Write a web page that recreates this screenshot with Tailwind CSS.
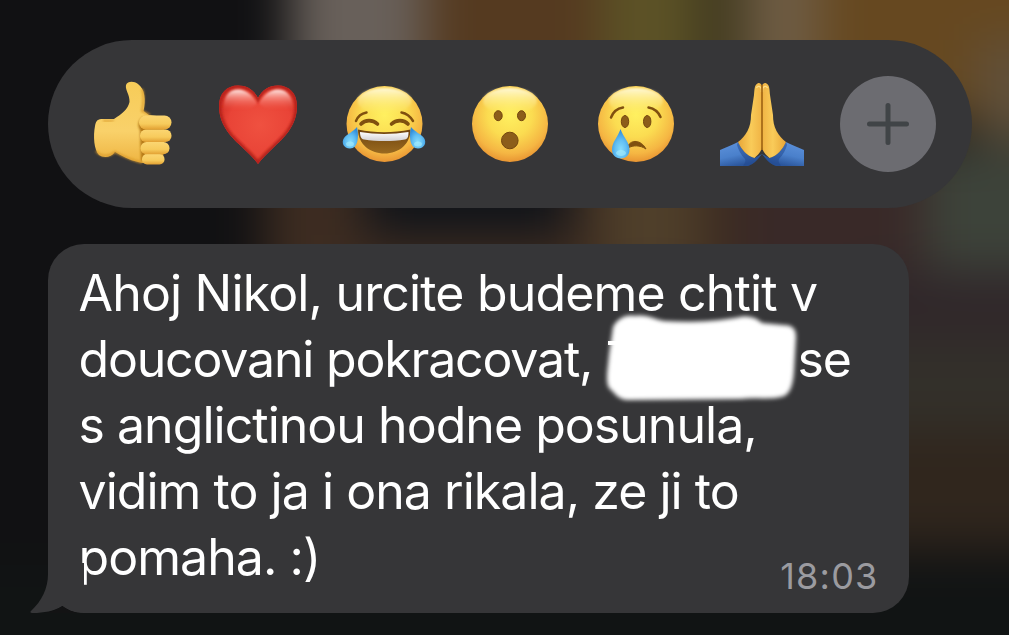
<!DOCTYPE html>
<html lang="cs">
<head>
<meta charset="utf-8">
<title>Message reactions</title>
<script src="https://cdn.jsdelivr.net/npm/@tailwindcss/browser@4"></script>
</head>
<body class="relative h-[635px] w-[1009px] overflow-hidden bg-[#111113] font-['Inter',sans-serif]">
<!-- blurred wallpaper -->
<svg class="absolute inset-0" width="1009" height="635" viewBox="0 0 1009 635">
  <defs><filter id="bl" x="-300" y="-300" width="1600" height="1300" filterUnits="userSpaceOnUse" color-interpolation-filters="sRGB"><feGaussianBlur stdDeviation="24"/></filter></defs>
  <rect width="1009" height="635" fill="#111113"/>
  <g filter="url(#bl)">
    <rect x="-300" y="-300" width="1700" height="1300" fill="#111113"/>
    <rect x="290" y="-120" width="140" height="240" fill="#68605a"/>
    <rect x="425" y="-120" width="190" height="240" fill="#553a20"/>
    <rect x="600" y="-120" width="100" height="240" fill="#5c5226"/>
    <rect x="695" y="-120" width="50" height="240" fill="#40391f"/>
    <rect x="745" y="-120" width="80" height="240" fill="#6e5c44"/>
    <rect x="820" y="-120" width="330" height="240" fill="#664820"/>
    <rect x="975" y="40" width="150" height="100" fill="#60503a"/>
    <rect x="265" y="120" width="660" height="180" fill="#3d2c21"/>
    <rect x="365" y="120" width="205" height="115" fill="#0f1319"/>
    <rect x="600" y="150" width="100" height="130" fill="#4f3f2a"/>
    <rect x="740" y="160" width="220" height="140" fill="#392928"/>
    <rect x="925" y="145" width="200" height="125" fill="#3d433a"/>
    <rect x="850" y="270" width="300" height="80" fill="#30272a"/>
    <rect x="850" y="340" width="300" height="90" fill="#33302a"/>
    <rect x="850" y="430" width="300" height="120" fill="#30261d"/>
    <rect x="-200" y="565" width="1400" height="200" fill="#111414"/>
  </g>
</svg>

<main class="relative flex flex-col items-start gap-9 pl-12 pt-10">
  <section class="flex h-[168px] w-[924px] items-center gap-4 rounded-full bg-[#363638] pl-8">
    <svg class="shrink-0" width="110" height="110" viewBox="0 -1 110 110">
      <defs>
        <linearGradient id="th" x1="0" y1="0" x2="0" y2="1"><stop offset="0" stop-color="#f7cc58"/><stop offset=".6" stop-color="#f9d16a"/><stop offset="1" stop-color="#eeb340"/></linearGradient>
        <linearGradient id="fi" x1="0" y1="0" x2="0" y2="1"><stop offset="0" stop-color="#fbd672"/><stop offset=".6" stop-color="#f7cb5c"/><stop offset="1" stop-color="#e2a032"/></linearGradient>
        <filter id="s1" x="-20%" y="-20%" width="140%" height="140%"><feGaussianBlur stdDeviation="1"/></filter>
      </defs>
      <path d="M46 15C47.500 11 54 11 58 14C65 19 66 30 63.500 41L69 45L84 47L83 92C76 95 66 94 58 92C49 90 42 86 35 82C31 88 23 88 19 85C14 80 13 66 15 56C16 50 18 49 23 49L34 49C42 44 48 39 49.500 32C50 25 45 20 46 15Z" fill="url(#th)"/>
      <path d="M62 19C65 27 63 35 62 41L70 45M16 81C22 88 30 86 35 82C45 87 53 91 62 92.500" fill="none" stroke="#d99a2c" stroke-width="1.800" filter="url(#s1)"/>
      <path d="M34 50C31 52 27 50 23 51" fill="none" stroke="#d99a2c" stroke-width="1.500" filter="url(#s1)"/>
      <path d="M63 47C57 51 58 57 60 60L61 91L82 89L85 49Z" fill="#b57919" filter="url(#s1)"/>
      <rect x="62" y="84" width="22.500" height="10.500" rx="5" fill="url(#fi)"/>
      <rect x="60.500" y="72" width="29" height="12.300" rx="6" fill="url(#fi)"/>
      <rect x="60" y="59.500" width="31.500" height="12.500" rx="6" fill="url(#fi)"/>
      <rect x="59" y="45.500" width="32.500" height="14" rx="7" fill="url(#fi)"/>
    </svg>

    <svg class="shrink-0" width="110" height="110" viewBox="1 -1 110 110">
      <defs>
        <radialGradient id="he" cx=".5" cy=".5" r=".58"><stop offset="0" stop-color="#ef5140"/><stop offset=".6" stop-color="#e94437"/><stop offset="1" stop-color="#c5261c"/></radialGradient>
        <linearGradient id="hs" x1="0" y1="0" x2="0" y2="1"><stop offset="0" stop-color="#ffece8"/><stop offset=".4" stop-color="#fba69c" stop-opacity=".65"/><stop offset="1" stop-color="#f05b4b" stop-opacity="0"/></linearGradient>
        <clipPath id="hc"><path d="M53 94C49 88 43 83 36 76C25 66 14 54 14 36C14 23 22 15.500 33 15.500C42 15.500 49 20 53 28C57 20 64 15.500 73 15.500C84 15.500 92 23 92 36C92 54 81 66 70 76C63 83 57 88 53 94Z"/></clipPath>
        <filter id="s2"><feGaussianBlur stdDeviation="1.300"/></filter>
      </defs>
      <g clip-path="url(#hc)">
        <rect x="10" y="10" width="90" height="90" fill="url(#he)"/>
        <path d="M53 94C49 88 43 83 36 76C25 66 14 54 14 36C14 23 22 15.500 33 15.500C42 15.500 49 20 53 28C57 20 64 15.500 73 15.500C84 15.500 92 23 92 36C92 54 81 66 70 76C63 83 57 88 53 94Z" fill="none" stroke="#b8231a" stroke-width="5" filter="url(#s2)"/>
        <path d="M19 36C19 25 25 19.500 33 19.500C42 19.500 48 26 52 33C48 39 38 41 19 40ZM54 33C58 26 64 19.500 73 19.500C81 19.500 87 25 88 36L88 40C68 41 58 39 54 33Z" fill="url(#hs)" filter="url(#s1)"/>
      </g>
    </svg>

    <svg class="shrink-0" width="110" height="110" viewBox="2 -1 110 110">
      <defs>
        <radialGradient id="fa" cx=".5" cy=".38" r=".65"><stop offset="0" stop-color="#fff060"/><stop offset=".45" stop-color="#fbdc51"/><stop offset=".78" stop-color="#f5b643"/><stop offset="1" stop-color="#e58c2e"/></radialGradient>
        <linearGradient id="gl" x1="0" y1="0" x2="0" y2="1"><stop offset="0" stop-color="#fffbe0" stop-opacity=".95"/><stop offset="1" stop-color="#fff07a" stop-opacity="0"/></linearGradient>
        <linearGradient id="mo" x1="0" y1="0" x2="0" y2="1"><stop offset="0" stop-color="#6f430e"/><stop offset="1" stop-color="#9a6a20"/></linearGradient>
        <radialGradient id="te" cx=".5" cy=".7" r=".65"><stop offset="0" stop-color="#86dcfc"/><stop offset=".5" stop-color="#62bff3"/><stop offset="1" stop-color="#318ddb"/></radialGradient>
        <linearGradient id="to" x1="0" y1="0" x2="0" y2="1"><stop offset="0" stop-color="#ffffff"/><stop offset="1" stop-color="#d2cfd2"/></linearGradient>
      </defs>
      <circle cx="54.500" cy="54" r="38" fill="url(#fa)"/>
      <ellipse cx="54.500" cy="31" rx="27" ry="13" fill="url(#gl)" filter="url(#s1)"/>
      <g fill="none" stroke="#80500f" stroke-linecap="round">
        <path d="M26 51C28 46 31 43.500 36.500 42.500M71.500 42.500C77 43.500 80 46 83 51" stroke-width="2.500"/>
        <path d="M31 54C35 49.500 43 49.500 47.500 54M61.500 54C66 49.500 74 49.500 78 54" stroke-width="3.600"/>
      </g>
      <path d="M28 59.500C45 63 63 63 80.500 59.500C80.500 74 69 83.500 54.500 83.500C40 83.500 28 74 28 59.500Z" fill="url(#mo)"/>
      <path d="M30 62C46 64.500 62 64.500 78.500 62C78.500 67 77.500 69 75 69.500C62 71.500 47 71.500 34 69.500C31 69 30 66 30 62Z" fill="url(#to)"/>
      <path d="M27 57C29 66 28.500 78.500 20 78.500C13.500 78.500 11 72.500 14 68C17 64 23 62 27 57Z" fill="url(#te)"/>
      <path d="M81 57C79 66 79.500 78.500 88 78.500C94.500 78.500 97 72.500 94 68C91 64 85 62 81 57Z" fill="url(#te)"/>
      <ellipse cx="20" cy="74" rx="4" ry="2.500" fill="#a8effd" opacity=".6"/><ellipse cx="88" cy="74" rx="4" ry="2.500" fill="#a8effd" opacity=".6"/>
    </svg>

    <svg class="shrink-0" width="110" height="110" viewBox="0 -1 110 110">
      <circle cx="52" cy="54" r="38" fill="url(#fa)"/>
      <ellipse cx="52" cy="31" rx="27" ry="13" fill="url(#gl)" filter="url(#s1)"/>
      <g fill="#8c5d1a" stroke="#73450e" stroke-width="1">
        <ellipse cx="40.200" cy="45.700" rx="4" ry="5"/><ellipse cx="63.500" cy="45.700" rx="4" ry="5"/>
        <circle cx="51.800" cy="70.500" r="8.300"/>
      </g>
    </svg>

    <svg class="shrink-0" width="110" height="110" viewBox="2 -1 110 110">
      <circle cx="54" cy="54" r="38" fill="url(#fa)"/>
      <ellipse cx="54" cy="31" rx="27" ry="13" fill="url(#gl)" filter="url(#s1)"/>
      <g fill="#8c5d1a" stroke="#73450e" stroke-width="1">
        <ellipse cx="43" cy="51.500" rx="3.700" ry="6"/><ellipse cx="65.200" cy="51.500" rx="3.700" ry="6"/>
      </g>
      <path d="M29 47.500C31 42 35 38.500 41 37.500M66.500 37.500C72 38.500 76 41 78.500 47" fill="none" stroke="#80500f" stroke-width="2.500" stroke-linecap="round"/>
      <path d="M46 76C49 69.500 59 69.500 64 79C58 75 51 75 46 78Z" fill="#80500f" stroke="#80500f" stroke-width="1" stroke-linejoin="round"/>
      <path d="M38.500 59C41 67 47.500 72 47.500 79.500C47.500 85 44 88.500 38.800 88.500C33.500 88.500 30 85 30 79.500C30 72 36 67 38.500 59Z" fill="url(#te)"/>
      <ellipse cx="39" cy="83" rx="5" ry="3" fill="#a8effd" opacity=".6"/>
    </svg>

    <svg class="shrink-0" width="110" height="110" viewBox="2 -1 110 110">
      <defs>
        <linearGradient id="ha" x1="0" y1="0" x2="1" y2="0"><stop offset="0" stop-color="#e8a638"/><stop offset=".55" stop-color="#f9cb59"/><stop offset="1" stop-color="#f0b344"/></linearGradient>
        <linearGradient id="sl" x1="0" y1="0" x2=".4" y2="1"><stop offset="0" stop-color="#5f93dc"/><stop offset=".6" stop-color="#4a80cb"/><stop offset="1" stop-color="#2b569c"/></linearGradient>
      </defs>
      <g id="hand">
        <path d="M12 80C18 77 25 75 30 72C33 79 39 86 47 88L54 84C50 89 46 94 40 96L12 96Z" fill="url(#sl)"/>
        <path d="M30 72C33 79 39 86 47 88L53 85C49 90 46 94 40 96L35 96C37 93 38 91 37 89C33 85 30 79 29 75Z" fill="#1f458b" opacity=".5"/>
        <path d="M49 14C46.500 15 46.500 20 46 25L43 45C43 51 42 56 39.500 61C36.500 66 34 69 30 72C33 79 39 86 46.500 88C50 85 54 81 54 76L54 17C54 13 50 12 49 14Z" fill="url(#ha)"/>
        <path d="M48.500 18C50 15 54 16 53.500 22" fill="none" stroke="#ffe08a" stroke-width="1.300"/>
      </g>
      <use href="#hand" transform="translate(108 0) scale(-1 1)"/>
      <path d="M54 15L54 80" stroke="#a66b18" stroke-width="1.800"/>
    </svg>

    <button class="ml-1 flex size-24 shrink-0 items-center justify-center rounded-full bg-[#6c6c71]" aria-label="Další reakce">
      <svg width="42" height="42" viewBox="0 0 42 42"><path d="M21 2.500V39.500M2.500 21H39.500" stroke="#404447" stroke-width="5" stroke-linecap="round"/></svg>
    </button>
  </section>

  <section class="relative h-[369px] w-[861px] rounded-[36px] bg-[#363638] pl-[30.500px] pt-4 text-[50px] leading-[66px] whitespace-nowrap text-white">
    <svg class="absolute -left-[18px] bottom-0" width="60" height="50" viewBox="30 563 60 50"><path d="M48 563V574C48 588 42 601 31 611C29.500 612.500 31 613 33 613C44 613 54 611 62.500 606C68 610 74 613 84 613L84 563Z" fill="#363638"/><path d="M44 613C51 612 57 609.500 62.500 606C67 609.500 73 612.500 80 613Z" fill="#131314"/></svg>
    <p class="tracking-[-0.83px]">Ahoj Nikol, urcite budeme chtit v</p>
    <p class="flex"><span class="w-[719px] tracking-[-1.18px]">doucovani pokracovat,</span><span class="tracking-[-1.2px]">se</span></p>
    <p class="tracking-[-0.97px]">s anglictinou hodne posunula,</p>
    <p class="tracking-[-0.96px]">vidim to ja i ona rikala, ze ji to</p>
    <p class="tracking-[-0.95px]">pomaha. :)</p>
    <!-- brushed-out name -->
    <svg class="absolute left-[542px] top-[56px]" width="220" height="120" viewBox="590 300 220 120">
      <defs><filter id="br"><feGaussianBlur stdDeviation="1.900"/></filter></defs>
      <path d="M613 327C617 319 626 314 635 316C646 314 653 319 664 321C690 323 716 321 735 318C745 315 755 316 762 323L783 325C792 325 796 328 796 337L794 371C793 387 789 396 781 397C767 400 753 397 741 399L628 400C618 400 615 393 609 388C605 381 608 368 609 355Z" fill="#fff" filter="url(#br)"/>
      <path d="M608 341H640V345H608Z" fill="#fff"/>
    </svg>
    <time class="absolute right-[30.500px] bottom-[15px] text-[36px] leading-[44px] tracking-[1.200px] text-[#9b9ba0]">18:03</time>
  </section>
</main>
</body>
</html>
